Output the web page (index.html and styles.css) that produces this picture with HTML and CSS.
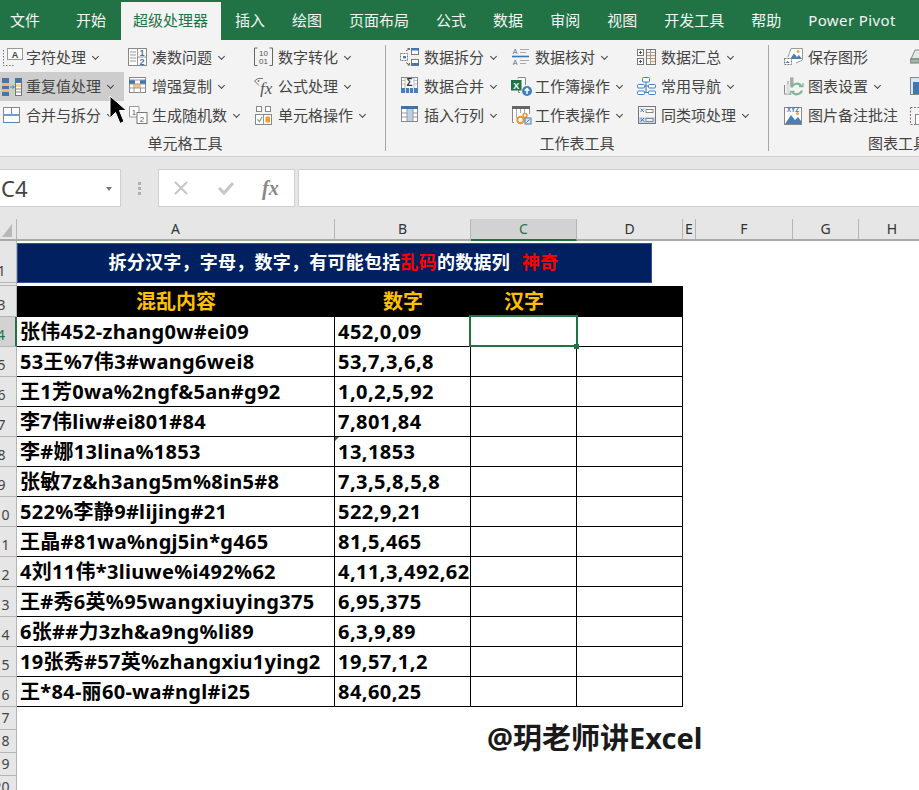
FILE: index.html
```html
<!DOCTYPE html>
<html lang="zh-CN">
<head>
<meta charset="utf-8">
<title>超级处理器</title>
<link rel="stylesheet" href="styles.css">
</head>
<body>
<div class="app">
  <nav class="tabs">
    <span class="tab first">文件</span><span class="tab">开始</span><span class="tab active">超级处理器</span><span class="tab">插入</span><span class="tab">绘图</span><span class="tab">页面布局</span><span class="tab">公式</span><span class="tab">数据</span><span class="tab">审阅</span><span class="tab">视图</span><span class="tab">开发工具</span><span class="tab">帮助</span><span class="tab latin">Power Pivot</span>
  </nav>

  <section class="ribbon">
    <div class="group g1">
      <div class="cols">
        <div class="col w128">
          <div class="item first-col"><svg class="ic" viewBox="0 0 24 21"><path d="M1.5 3V18.5H13" fill="none" stroke="#777" stroke-dasharray="1.5 1.5"/><rect x="5.5" y="1.5" width="15" height="11" fill="#fff" stroke="#999"/><text x="13" y="10.5" class="t8b" text-anchor="middle">A</text></svg><span>字符处理</span><i class="chev"></i></div>
          <div class="item first-col hot"><svg class="ic" viewBox="0 0 24 21"><rect x="0" y="2" width="7" height="18" fill="#4a74a8"/><rect x="0" y="7" width="7" height="3" fill="#f5b95f"/><rect x="0" y="13" width="7" height="3" fill="#f5b95f"/><path d="M8 11H12M10.5 9.5L12.5 11L10.5 12.5" fill="none" stroke="#3d85c6"/><rect x="13.5" y="2.5" width="6" height="17" fill="#fbfbfb" stroke="#777"/><rect x="13" y="2" width="7" height="5" fill="#4a74a8"/><rect x="14" y="8" width="5" height="3" fill="#f9cf8e"/><path d="M14 13H19M14 16H19" stroke="#888"/></svg><span>重复值处理</span><i class="chev"></i></div>
          <div class="item first-col"><svg class="ic" viewBox="0 0 24 21"><rect x="1.5" y="2.5" width="16" height="15" fill="#fff" stroke="#888"/><path d="M9.5 3V9" stroke="#888"/><path d="M2 10H17" stroke="#4a86c5" stroke-width="1.6"/><path d="M2 17.5H17" stroke="#4a86c5"/></svg><span>合并与拆分</span><i class="chev"></i></div>
        </div>
        <div class="col w126">
          <div class="item"><svg class="ic" viewBox="0 0 24 21"><rect x="0.5" y="1.5" width="18" height="17" fill="#fff" stroke="#888"/><path d="M9.5 2V18M2 5H8M2 8H8M2 11H8M2 14H8M10 10H18" stroke="#999"/><text x="14" y="8.5" class="t8b blue" text-anchor="middle">1</text><text x="14" y="17.5" class="t8b blue" text-anchor="middle">2</text></svg><span>凑数问题</span><i class="chev"></i></div>
          <div class="item"><svg class="ic" viewBox="0 0 24 21"><rect x="1.5" y="1.5" width="16" height="15" fill="#fff" stroke="#888"/><rect x="1" y="4" width="6" height="4" fill="#3f76b5"/><rect x="12" y="4" width="6" height="4" fill="#3f76b5"/><rect x="5" y="8" width="8" height="4" fill="#f9c47a"/><path d="M2 4H17M2 8H17M2 12H17M6 12V17M12.5 12V17" stroke="#999" fill="none"/></svg><span>增强复制</span><i class="chev"></i></div>
          <div class="item"><svg class="ic" viewBox="0 0 24 21"><path d="M9 12H1.5V1.500H11V7" fill="#fff" stroke="#999"/><rect x="9" y="7.5" width="10" height="11" fill="#fff" stroke="#777"/><text x="6" y="9.5" class="t8" text-anchor="middle">1</text><text x="14" y="16.5" class="t8" text-anchor="middle">2</text></svg><span>生成随机数</span><i class="chev"></i></div>
        </div>
        <div class="col">
          <div class="item"><svg class="ic" viewBox="0 0 24 21"><path d="M3.5 1H0.5V18.5H3.5M15.5 1H18.5V18.5H15.5" fill="none" stroke="#666"/><text x="9.5" y="8.5" class="t8m" text-anchor="middle">10</text><text x="9.5" y="16.5" class="t8m" text-anchor="middle">01</text></svg><span>数字转化</span><i class="chev"></i></div>
          <div class="item"><svg class="ic" viewBox="0 0 24 21"><path d="M9 2.5H4L0.500 5L5 9.5" fill="none" stroke="#777"/><circle cx="4.5" cy="5" r="0.9" fill="#777"/><text x="6" y="17.5" class="tfx">fx</text></svg><span>公式处理</span><i class="chev"></i></div>
          <div class="item"><svg class="ic" viewBox="0 0 24 21"><rect x="2.5" y="1.5" width="5" height="5" fill="#fff" stroke="#888"/><rect x="11.5" y="1.5" width="5" height="5" fill="#fff" stroke="#888"/><rect x="1.5" y="9.5" width="16" height="10" fill="#fff" stroke="#888"/><path d="M9.5 10V19" stroke="#999"/><path d="M3.5 14.5L5.5 16.5L8 12" fill="none" stroke="#6aa88a" stroke-width="1.2"/><rect x="11.5" y="11.5" width="4.5" height="6" fill="#ee9d3c"/></svg><span>单元格操作</span><i class="chev"></i></div>
        </div>
      </div>
      <div class="glabel">单元格工具</div>
    </div>

    <div class="group g2">
      <div class="cols">
        <div class="col w111">
          <div class="item"><svg class="ic" viewBox="0 0 24 21"><rect x="0.5" y="6.5" width="7" height="7" fill="#fff" stroke="#777" stroke-dasharray="2 1"/><rect x="3" y="9" width="3" height="2.5" fill="#4a7fb5"/><rect x="11.5" y="1.5" width="7" height="6" fill="#fff" stroke="#777"/><rect x="11" y="1" width="8" height="2.5" fill="#3f76b5"/><rect x="11.5" y="12.5" width="7" height="6" fill="#fff" stroke="#777"/><rect x="11" y="16" width="8" height="2.5" fill="#3f76b5"/><path d="M6 4L9.5 1.5M7.5 1.5H9.5V3M6 15.5L9.5 18M7.5 18H9.5V16" fill="none" stroke="#666"/></svg><span>数据拆分</span><i class="chev"></i></div>
          <div class="item"><svg class="ic" viewBox="0 0 24 21"><rect x="1.5" y="1.5" width="16" height="15" fill="#fff" stroke="#888"/><path d="M5 2V12M14 2V12M2 4.5H5M14 4.5H17M2 8H5M14 8H17" stroke="#bbb"/><text x="9.5" y="10" class="t9b" text-anchor="middle">Σ</text><rect x="1" y="12" width="17" height="5" fill="#4a7fb5"/><path d="M5.5 12V17M9.5 12V17M13.5 12V17" stroke="#dce6f1"/></svg><span>数据合并</span><i class="chev"></i></div>
          <div class="item"><svg class="ic" viewBox="0 0 24 21"><rect x="1.5" y="1.5" width="16" height="15" fill="#fff" stroke="#888"/><rect x="7" y="2" width="6" height="14" fill="#b9d0e8"/><rect x="1" y="1" width="17" height="3" fill="#4a6f9c"/><path d="M7 4V16M13 4V16M2 8H7M13 8H17M2 12H7M13 12H17" stroke="#999"/></svg><span>插入行列</span><i class="chev"></i></div>
        </div>
        <div class="col w126">
          <div class="item"><svg class="ic" viewBox="0 0 24 21"><text x="4" y="7" class="t7" text-anchor="middle">A</text><text x="4" y="18" class="t7" text-anchor="middle">A</text><path d="M9 2.5H18M9 5.5H15M9 13.5H18M9 16.5H15" stroke="#aaa"/><path d="M1 9.5H18" stroke="#3f76b5" stroke-width="1.6"/></svg><span>数据核对</span><i class="chev"></i></div>
          <div class="item"><svg class="ic" viewBox="0 0 24 21"><path d="M7 2.5V1.5H14.5V9M9 16.5H7.5V13" fill="#fff" stroke="#888"/><rect x="0" y="4" width="10.5" height="10.5" fill="#217346"/><text x="5.2" y="12.5" class="t8w" text-anchor="middle">X</text><circle cx="16" cy="15" r="5" fill="#3f7fc1"/><path d="M16 18V12.5M13.8 14.8L16 12.5L18.2 14.8" fill="none" stroke="#fff" stroke-width="1.5"/></svg><span>工作簿操作</span><i class="chev"></i></div>
          <div class="item"><svg class="ic" viewBox="0 0 24 21"><path d="M3 17.5H1.5V1.5H18.5V9" fill="#fff" stroke="#888"/><rect x="1" y="1" width="18" height="3" fill="#666"/><path d="M5.5 4V13M9.5 4V8M13.5 4V8" stroke="#aaa"/><circle cx="9.5" cy="15" r="3.2" fill="none" stroke="#e8962e" stroke-width="2"/><circle cx="14" cy="10.5" r="2" fill="none" stroke="#e8962e" stroke-width="1.5"/><rect x="14" y="13" width="6" height="6" fill="#dbe8f5" stroke="#4a7fb5"/><path d="M15.5 17.5L18.5 14.5" stroke="#3f76b5"/></svg><span>工作表操作</span><i class="chev"></i></div>
        </div>
        <div class="col">
          <div class="item"><svg class="ic" viewBox="0 0 24 21"><rect x="0.5" y="2.5" width="6" height="6" fill="#fff" stroke="#777"/><rect x="0.5" y="11.5" width="6" height="6" fill="#fff" stroke="#777"/><path d="M2 5.5H5M3.5 4V7M2 14.5H5M3.5 13V16" stroke="#555"/><rect x="9.5" y="2.5" width="9" height="15" fill="#fff" stroke="#777"/><path d="M10 5.5H18M10 11.5H18M13.5 3V17" stroke="#999"/><path d="M14 8.5H18M14 14.5H18M10 8.5H13" stroke="#e6a23c" stroke-width="1.3"/></svg><span>数据汇总</span><i class="chev"></i></div>
          <div class="item"><svg class="ic" viewBox="0 0 24 21"><g fill="#fff" stroke="#3f7fc1"><rect x="5.5" y="1.5" width="7" height="4.5" rx="1"/><rect x="0.5" y="8.5" width="7" height="3.5" rx="1"/><rect x="11.5" y="8.5" width="7" height="3.5" rx="1"/><rect x="0.5" y="15" width="7" height="3.5" rx="1"/><rect x="11.5" y="15" width="7" height="3.5" rx="1"/></g><path d="M9 6V13.5M7.5 10H11.5M7.5 16.5H11.5M9 13V16.5" stroke="#3f7fc1" fill="none"/></svg><span>常用导航</span><i class="chev"></i></div>
          <div class="item"><svg class="ic" viewBox="0 0 24 21"><rect x="1.5" y="1.5" width="17" height="17" fill="#f4f4f4" stroke="#777"/><rect x="2" y="12" width="16" height="6" fill="#c3d6ea"/><rect x="9" y="4.5" width="7" height="3" fill="#fff" stroke="#888"/><rect x="9" y="13.5" width="7" height="3" fill="#eef" stroke="#888"/><path d="M3.5 3.5L7 7M7 3.5L3.5 7M3.5 13L7 16.5M7 13L3.5 16.5" stroke="#3f76b5"/></svg><span>同类项处理</span><i class="chev"></i></div>
        </div>
      </div>
      <div class="glabel">工作表工具</div>
    </div>

    <div class="group g3">
      <div class="cols">
        <div class="col w126">
          <div class="item"><svg class="ic" viewBox="0 0 24 21"><path d="M4 10L7 1.5H18.5V13L12 16" fill="#fff" stroke="#999"/><path d="M6 12L10 6.5L13 10L15 8L18 12Z" fill="#4a7fb5"/><circle cx="14" cy="4.5" r="1.5" fill="#f0a94a"/><rect x="0.5" y="11.5" width="7" height="6" fill="#fff" stroke="#777" stroke-dasharray="2 1"/><path d="M1.5 16L3.5 14L6 16Z" fill="#4a7fb5"/></svg><span>保存图形</span></div>
          <div class="item"><svg class="ic" viewBox="0 0 24 21"><path d="M0.5 17.5V9M8 1.5V9M4 5V12M0 18H6" stroke="#888" fill="none"/><rect x="6" y="1.5" width="3.5" height="9" fill="#aaa"/><rect x="2.5" y="8" width="3" height="10" fill="#ddd"/><path d="M7.5 11.5A5.5 5.5 0 0 1 17.5 10.5M18 14.5A5.5 5.5 0 0 1 8 15.5" fill="none" stroke="#7fb79b" stroke-width="2.2"/><path d="M15 10.5H19V7M10.5 15.5H6.5V19" fill="none" stroke="#7fb79b" stroke-width="1.3"/></svg><span>图表设置</span><i class="chev"></i></div>
          <div class="item"><svg class="ic" viewBox="0 0 24 21"><rect x="0.5" y="2.5" width="17" height="17" fill="#fff" stroke="#888"/><path d="M1 19L7 10L11 15L14 12L17 16V19Z" fill="#4a7fb5"/><circle cx="13.5" cy="8.5" r="1.5" fill="#f0a94a"/><text x="9" y="6.5" class="t7x" text-anchor="middle">XYZ</text></svg><span>图片备注批注</span></div>
        </div>
        <div class="col">
          <div class="item"><svg class="ic" viewBox="0 0 24 21"><path d="M1 12L5 3H16V12Z" fill="#dfe8e4" stroke="#888"/><rect x="0" y="12" width="18" height="4" fill="#9db7a8" stroke="#777"/></svg></div>
          <div class="item"><svg class="ic" viewBox="0 0 24 21"><rect x="0.5" y="1.5" width="17" height="17" fill="#dbe6f2" stroke="#888"/><rect x="3" y="6" width="8" height="12" fill="#3f76b5"/></svg></div>
          <div class="item"><svg class="ic" viewBox="0 0 24 21"><rect x="0.5" y="2.5" width="17" height="17" fill="none" stroke="#777" stroke-dasharray="2 1.5"/><rect x="5.5" y="9.5" width="10" height="10" fill="#fff" stroke="#888"/></svg></div>
        </div>
      </div>
      <div class="glabel">图表工具</div>
    </div>
  </section>

  <section class="fbar">
    <div class="namebox"><span>C4</span><i class="caret"></i></div>
    <div class="grip"><i></i><i></i><i></i></div>
    <div class="fbtns">
      <svg class="fx-ic" viewBox="0 0 16 16"><path d="M2 2L14 14M14 2L2 14" stroke="#c6c6c6" stroke-width="2" fill="none"/></svg>
      <svg class="fx-ic" viewBox="0 0 16 16"><path d="M1 8L6 13L15 3" stroke="#c6c6c6" stroke-width="3" fill="none"/></svg>
      <span class="fx-text">fx</span>
    </div>
    <div class="finput"></div>
  </section>

  <section class="sheet">
    <div class="colhead">
      <div class="corner"><i></i></div>
      <div class="ch a">A</div><div class="ch b">B</div><div class="ch c sel">C</div><div class="ch d">D</div><div class="ch e">E</div><div class="ch f">F</div><div class="ch g">G</div><div class="ch h">H</div>
    </div>

    <div class="row r1">
      <div class="rh">1</div>
      <div class="banner">拆分汉字，字母，数字，有可能包括<em>乱码</em>的数据列<em class="spaced">神奇</em></div>
    </div>
    <div class="row r2"><div class="rh"></div></div>
    <div class="row r3">
      <div class="rh">3</div>
      <div class="hc a">混乱内容</div><div class="hc b">数字</div><div class="hc c">汉字</div><div class="hc d"></div>
    </div>

    <div class="row"><div class="rh cur">4</div><div class="cell a">张伟452-zhang0w#ei09</div><div class="cell b">452,0,09</div><div class="cell c active-cell"><i class="handle"></i></div><div class="cell d"></div></div>
    <div class="row"><div class="rh">5</div><div class="cell a">53王%7伟3#wang6wei8</div><div class="cell b">53,7,3,6,8</div><div class="cell c"></div><div class="cell d"></div></div>
    <div class="row"><div class="rh">6</div><div class="cell a">王1芳0wa%2ngf&amp;5an#g92</div><div class="cell b">1,0,2,5,92</div><div class="cell c"></div><div class="cell d"></div></div>
    <div class="row"><div class="rh">7</div><div class="cell a">李7伟liw#ei801#84</div><div class="cell b">7,801,84</div><div class="cell c"></div><div class="cell d"></div></div>
    <div class="row"><div class="rh">8</div><div class="cell a">李#娜13lina%1853</div><div class="cell b flag">13,1853</div><div class="cell c"></div><div class="cell d"></div></div>
    <div class="row"><div class="rh">9</div><div class="cell a">张敏7z&amp;h3ang5m%8in5#8</div><div class="cell b">7,3,5,8,5,8</div><div class="cell c"></div><div class="cell d"></div></div>
    <div class="row"><div class="rh">10</div><div class="cell a">522%李静9#lijing#21</div><div class="cell b">522,9,21</div><div class="cell c"></div><div class="cell d"></div></div>
    <div class="row"><div class="rh">11</div><div class="cell a">王晶#81wa%ngj5in*g465</div><div class="cell b">81,5,465</div><div class="cell c"></div><div class="cell d"></div></div>
    <div class="row"><div class="rh">12</div><div class="cell a">4刘11伟*3liuwe%i492%62</div><div class="cell b">4,11,3,492,62</div><div class="cell c"></div><div class="cell d"></div></div>
    <div class="row"><div class="rh">13</div><div class="cell a">王#秀6英%95wangxiuying375</div><div class="cell b">6,95,375</div><div class="cell c"></div><div class="cell d"></div></div>
    <div class="row"><div class="rh">14</div><div class="cell a">6张##力3zh&amp;a9ng%li89</div><div class="cell b">6,3,9,89</div><div class="cell c"></div><div class="cell d"></div></div>
    <div class="row"><div class="rh">15</div><div class="cell a">19张秀#57英%zhangxiu1ying2</div><div class="cell b">19,57,1,2</div><div class="cell c"></div><div class="cell d"></div></div>
    <div class="row"><div class="rh">16</div><div class="cell a">王*84-丽60-wa#ngl#i25</div><div class="cell b">84,60,25</div><div class="cell c"></div><div class="cell d"></div></div>

    <div class="row low"><div class="rh">17</div></div>
    <div class="row low"><div class="rh">18</div></div>
    <div class="row low"><div class="rh">19</div></div>
    <div class="row low"><div class="rh">20</div></div>

    <div class="mark">@玥老师讲Excel</div>
  </section>

  <svg class="cursor" viewBox="0 0 18 32"><path d="M1 1V23L6.5 17.5L11 28.5L15 26.5L10.5 15.5H17.5Z" fill="#000" stroke="#fff" stroke-width="1"/></svg>
</div>
</body>
</html>
```

FILE: styles.css
```css
* { box-sizing: border-box; }
html, body { margin: 0; padding: 0; height: 790px; overflow: hidden; background: #fff; }
body { font-family: "Noto Sans", "Noto Sans CJK SC", sans-serif; color: #444; }
.app { position: relative; width: 919px; height: 790px; overflow: hidden; }

/* tabs */
.tabs { display: flex; gap: 27px; height: 40px; padding: 2px 0 0 10px; background: #217346; color: #f4f4f4; font-size: 15px; line-height: 36px; white-space: nowrap; }
.tab.first { margin-right: 9px; }
.tab.active { background: #f3f3f3; color: #217346; padding: 0 13px 0 12px; margin: 0 -13px 0 -12px; }
.tab.latin { letter-spacing: 0.4px; }

/* ribbon */
.ribbon { display: flex; height: 117px; background: #f3f3f3; border-bottom: 1px solid #cfcfcf; overflow: hidden; }
.group { position: relative; flex: none; padding-top: 3px; font-size: 15px; }
.group.g1 { width: 386px; }
.group.g2 { width: 383px; padding-left: 14px; }
.group.g3 { width: 258px; padding-left: 15px; }
.group.g1::after, .group.g2::after { content: ""; position: absolute; right: 0; top: 5px; height: 106px; width: 1px; background: #a6a6a6; }
.cols { display: flex; }
.col { display: flex; flex-direction: column; }
.w128 { width: 128px; }
.w126 { width: 126px; }
.w111 { width: 111px; }
.item { display: flex; align-items: center; height: 29px; white-space: nowrap; color: #444; line-height: 1; }
.item.first-col { padding-left: 2px; width: 124px; }
.item.hot { background: #cdcdcd; }
.ic { width: 24px; height: 21px; flex: none; }
.chev { width: 5px; height: 5px; margin: -3px 0 0 7px; border-right: 1px solid #444; border-bottom: 1px solid #444; transform: rotate(45deg); flex: none; }
.glabel { height: 26px; line-height: 27px; text-align: center; color: #444; }
.group.g1 .glabel { width: 370px; }
.group.g2 .glabel { width: 354px; }
.group.g3 .glabel { width: 228px; }

/* svg text */
.ic text { font-family: "Liberation Sans", sans-serif; }
.t8 { font-size: 8px; fill: #555; }
.t8b { font-size: 9px; font-weight: 700; fill: #444; }
.t8b.blue { fill: #3f76b5; }
.t8m { font-size: 8px; fill: #555; }
.t9b { font-size: 10px; font-weight: 700; fill: #333; }
.t7 { font-size: 7px; fill: #4a6f9c; }
.t7x { font-size: 6.5px; font-weight: 700; fill: #3f76b5; }
.t8w { font-size: 9px; font-weight: 700; fill: #fff; }
.ic .tfx { font-family: "Liberation Serif", serif; font-style: italic; font-size: 17px; fill: #555; }

/* formula bar */
.fbar { display: flex; height: 62px; padding-top: 12px; background: #e6e6e6; align-items: flex-start; }
.namebox { position: relative; width: 121px; height: 38px; background: #fff; border: 1px solid #d0d0d0; border-left: 0; font-size: 22px; line-height: 36px; padding-left: 1px; color: #444; }
.caret { position: absolute; right: 8px; top: 17px; border-top: 4px solid #777; border-left: 3.5px solid transparent; border-right: 3.5px solid transparent; }
.grip { width: 37px; height: 38px; display: flex; flex-direction: column; align-items: center; justify-content: center; gap: 2px; }
.grip i { width: 3px; height: 3px; background: #b0b0b0; }
.fbtns { display: flex; align-items: center; width: 137px; height: 38px; background: #fff; border: 1px solid #d0d0d0; padding-left: 14px; }
.fx-ic { width: 16px; height: 16px; margin-right: 29px; }
.fx-text { font-family: "Liberation Serif", serif; font-style: italic; font-size: 20px; color: #888; font-weight: 700; margin-left: -1px; }
.finput { flex: 1; height: 38px; margin-left: 3px; background: #fff; border: 1px solid #d0d0d0; border-right: 0; }

/* sheet */
.sheet { position: relative; }
.colhead { display: flex; height: 22px; background: #e6e6e6; border-bottom: 2px solid #a9a9a9; font-size: 14px; line-height: 20px; color: #333; }
.corner { position: relative; flex: none; width: 17px; border-right: 1px solid #b5b5b5; }
.corner i { position: absolute; right: 4px; bottom: 2px; border-bottom: 13px solid #b8b8b8; border-left: 10px solid transparent; }
.ch { flex: none; text-align: center; border-right: 1px solid #b5b5b5; height: 20px; }
.a { width: 318px; }
.b { width: 136px; }
.c { width: 106px; }
.d { width: 106px; }
.e { width: 13px; }
.f { width: 97px; }
.g { width: 66px; }
.h { width: 66px; border-right: 0; }
.ch.sel { height: 22px; background: #d2d2d2; color: #217346; border-bottom: 2px solid #217346; }

.row { display: flex; height: 30px; }
.row.r1 { height: 42px; }
.row.r2 { height: 3px; }
.row.r3 { height: 31px; }
.row.low { height: 23px; }

.rh { flex: none; width: 17px; height: 100%; display: flex; justify-content: center; align-items: flex-end; padding-right: 13px; overflow: hidden; background: #e6e6e6; border-right: 1px solid #b5b5b5; border-bottom: 1px solid #b5b5b5; font-size: 14px; line-height: 23px; color: #444; white-space: nowrap; }
.rh.cur { background: #d2d2d2; color: #217346; border-right: 2px solid #217346; }

.banner { width: 635px; height: 40px; margin-top: 2px; padding-right: 2px; background: #002060; border: 1px solid #2f528f; color: #fff; font-size: 18px; font-weight: 700; line-height: 36px; letter-spacing: 0.25px; text-align: center; white-space: nowrap; }
.banner em { font-style: normal; color: #f00; }
.banner .spaced { margin-left: 12px; }

.hc { background: #000; color: #ffc000; font-size: 20px; font-weight: 700; line-height: 31px; text-align: center; }
.cell { position: relative; border-right: 1px solid #000; border-bottom: 1px solid #000; background: #fff; color: #000; font-size: 20px; font-weight: 700; line-height: 29px; letter-spacing: 0.3px; padding-left: 3px; white-space: nowrap; }
.cell.b { letter-spacing: 0.45px; }
.active-cell { z-index: 1; }
.active-cell::before { content: ""; position: absolute; left: -2px; top: -2px; right: -2px; bottom: -1px; border: 2px solid #217346; }
.handle { position: absolute; right: -3px; bottom: -3px; width: 5px; height: 5px; background: #217346; }
.flag::before { content: ""; position: absolute; left: 0; top: 0; border-top: 4px solid #217346; border-right: 4px solid transparent; }

.mark { position: absolute; left: 487px; top: 500px; color: #1a1a1a; font-size: 29px; font-weight: 700; line-height: 38px; white-space: nowrap; }

.cursor { position: absolute; left: 109px; top: 95px; width: 18px; height: 32px; }
```
